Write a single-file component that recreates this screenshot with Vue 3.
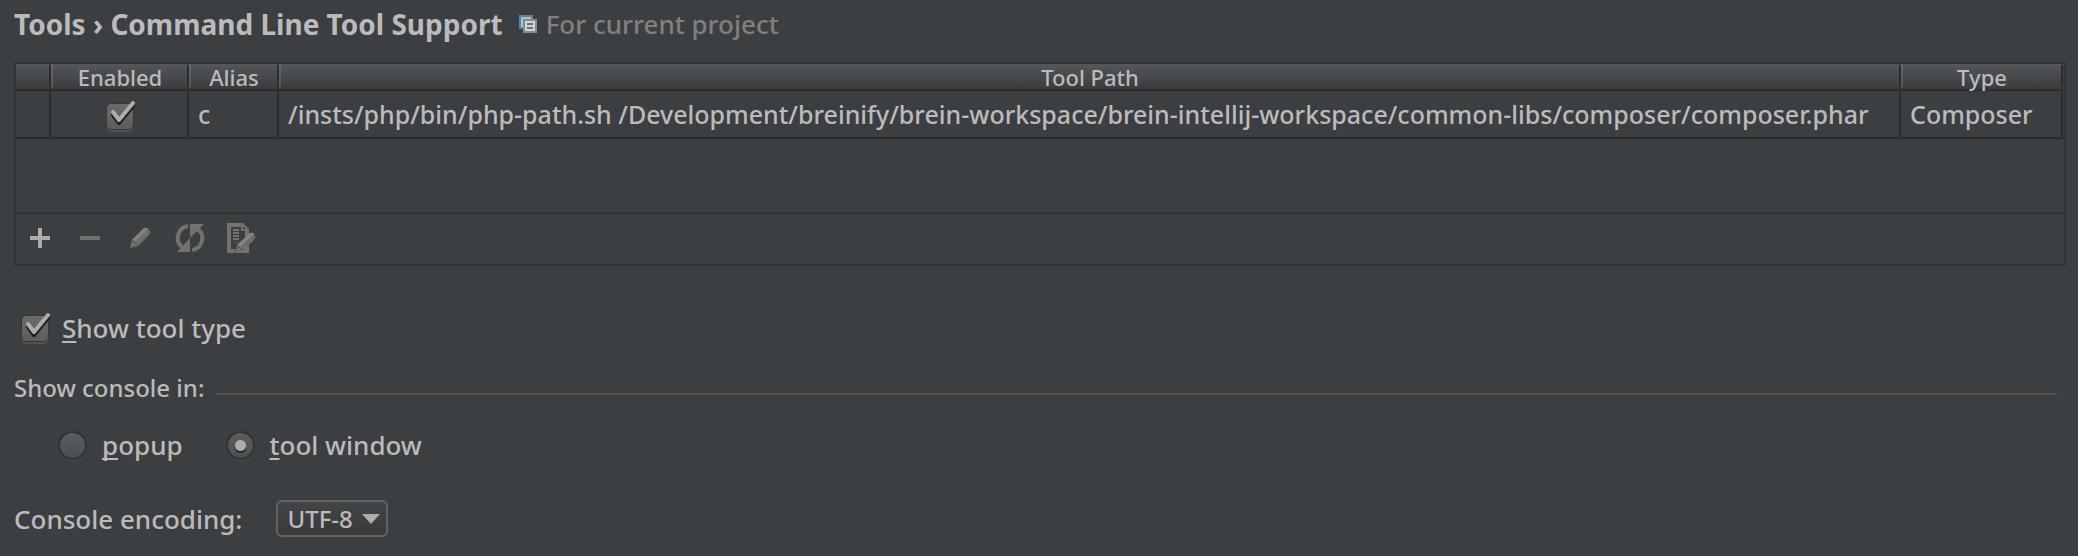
<script setup>
import { ref } from 'vue'

const tools = ref([
  {
    enabled: true,
    alias: 'c',
    path: '/insts/php/bin/php-path.sh /Development/breinify/brein-workspace/brein-intellij-workspace/common-libs/composer/composer.phar',
    type: 'Composer',
  },
])
const showType = ref(true)
const consoleIn = ref('window')
const encoding = ref('UTF-8')
</script>

<template>
  <main class="page">
    <header class="title">
      <h1>Tools › Command Line Tool Support</h1>
      <svg class="scope-icon" width="18" height="18" viewBox="0 0 18 18" aria-hidden="true">
        <path fill="#4a88ac" d="M0 0h14v14H0z" />
        <path fill="#b9c0c3" d="M2 2h10v10H2z" />
        <path fill="#4a5357" d="M4 4h10v10H4z" />
        <path fill="#868a87" d="M4 4h14v14H4z" />
        <path fill="#d2d4d2" d="M6 6h10v10H6z" />
        <path fill="#6f7371" d="M8 8h6v2H8zM8 12h6v2H8z" />
      </svg>
      <span class="scope">For current project</span>
    </header>

    <section class="panel">
      <table>
        <colgroup>
          <col class="c-mark" /><col class="c-enabled" /><col class="c-alias" /><col /><col class="c-type" />
        </colgroup>
        <thead>
          <tr>
            <th></th>
            <th>Enabled</th>
            <th>Alias</th>
            <th>Tool Path</th>
            <th>Type</th>
          </tr>
        </thead>
        <tbody>
          <tr v-for="tool in tools" :key="tool.alias">
            <td></td>
            <td class="center">
              <span class="tick">
                <input v-model="tool.enabled" type="checkbox" aria-label="Enabled" />
                <svg v-if="tool.enabled" width="32" height="32" viewBox="0 0 32 32" aria-hidden="true">
                  <path class="mark-shade" d="M9 15l6 8L29 6" />
                  <path class="mark" d="M9 12l6 8L29 3" />
                </svg>
              </span>
            </td>
            <td>{{ tool.alias }}</td>
            <td>{{ tool.path }}</td>
            <td>{{ tool.type }}</td>
          </tr>
        </tbody>
      </table>
      <div class="toolbar">
        <button type="button" aria-label="Add">
          <svg width="32" height="32" viewBox="0 0 32 32"><path fill="#adadad" d="M13 5h4v8h8v4h-8v8h-4v-8H5v-4h8z" /></svg>
        </button>
        <button type="button" aria-label="Remove">
          <svg width="32" height="32" viewBox="0 0 32 32"><path fill="#717272" d="M5 13h20v4H5z" /></svg>
        </button>
        <button type="button" aria-label="Edit">
          <svg width="32" height="32" viewBox="0 0 32 32">
            <path fill="#6c6d6d" d="M5 25l2-8L18 6q2-2 4-1l3 3q1 2-1 4L13 23z" />
            <path fill="#828383" d="M7 17L18 6q2-2 4-1l1 1L10 19z" />
            <path stroke="#4c4f50" d="M8 17l5 5" />
          </svg>
        </button>
        <button type="button" aria-label="Refresh">
          <svg width="32" height="32" viewBox="0 0 32 32">
            <path fill="#717272" d="M2 29h13V15zM29 1H15v14z" />
            <path fill="none" stroke="#717272" stroke-width="4" d="M13 3A12 12 0 0 0 7 24M17 27A12 12 0 0 0 23 6" />
          </svg>
        </button>
        <button type="button" aria-label="Open in editor">
          <svg width="32" height="32" viewBox="0 0 32 32">
            <path fill="#717272" fill-rule="evenodd" d="M2 0h16l6 6v24H2zM6 4v22h14V8h-4V4z" />
            <path fill="none" stroke="#717272" stroke-width="2" d="M8 7h6M8 10h6M8 13h6M8 16h6" />
            <path stroke="#575a5b" d="M8 19h6" />
            <path fill="#3c3f41" d="M18 3v3h3z" />
            <path fill="#6c6d6d" d="M10 30l2-8L24 11q2-2 4-1l2 3q1 2-1 4L17 28z" />
            <path fill="#828383" d="M12 22L24 11q2-2 4-1l1 1L15 24z" />
            <path stroke="#4c4f50" d="M12 22l5 5M10 30l2-8" />
          </svg>
        </button>
      </div>
    </section>

    <label class="option show-type">
      <span class="tick">
        <input v-model="showType" type="checkbox" />
        <svg v-if="showType" width="32" height="32" viewBox="0 0 32 32" aria-hidden="true">
          <path class="mark-shade" d="M9 15l6 8L29 6" />
          <path class="mark" d="M9 12l6 8L29 3" />
        </svg>
      </span>
      <span><u>S</u>how tool type</span>
    </label>

    <section role="radiogroup" aria-labelledby="console-in">
      <div id="console-in" class="group-title">Show console in:</div>
      <div class="radios">
        <label class="option">
          <input v-model="consoleIn" type="radio" name="console" value="popup" />
          <span><u>p</u>opup</span>
        </label>
        <label class="option">
          <input v-model="consoleIn" type="radio" name="console" value="window" />
          <span><u>t</u>ool window</span>
        </label>
      </div>
    </section>

    <div class="encoding">
      <label for="encoding">Console encoding:</label>
      <span class="combo">
        <select id="encoding" v-model="encoding">
          <option>UTF-8</option>
        </select>
        <svg width="18" height="10" viewBox="0 0 18 10" aria-hidden="true"><path fill="#adadad" d="M0 0h18L9 10z" /></svg>
      </span>
    </div>
  </main>
</template>

<style>
html {
  background: #3c3f41;
}
</style>

<style scoped>
.page {
  padding: 7px 12px 16px 14px;
  color: #bbbbbb;
  font: 500 26px/32px "Noto Sans", "Open Sans", sans-serif;
}
.title {
  display: flex;
  align-items: center;
  height: 34px;
}
h1 {
  margin: 0;
  font-size: 28px;
  font-weight: 700;
}
.scope-icon {
  margin: 0 9px 0 16px;
}
.scope {
  color: #808080;
}
.panel {
  margin-top: 21px;
  border: 2px solid #323232;
}
table {
  width: 100%;
  table-layout: fixed;
  border-collapse: separate;
  border-spacing: 0;
  padding-right: 1px;
  font-size: 25px;
  margin-bottom: 73px;
}
.c-mark { width: 35px; }
.c-enabled { width: 138px; }
.c-alias { width: 90px; }
.c-type { width: 162px; }
th,
td {
  box-sizing: border-box;
  white-space: nowrap;
}
th {
  height: 27px;
  padding: 1px 0 0;
  border-bottom: 2px solid #2c2d2e;
  font-size: 22px;
  font-weight: 500;
  line-height: 24px;
  background:
    linear-gradient(#2c2d2e, #2c2d2e) right 1px / 2px 22px no-repeat,
    linear-gradient(#66696b, #55585a) left 1px / 2px 22px no-repeat,
    linear-gradient(#54585b, #3a3b3d);
}
th:first-child {
  background:
    linear-gradient(#2c2d2e, #2c2d2e) right 1px / 2px 22px no-repeat,
    linear-gradient(#54585b, #3a3b3d);
}
td {
  height: 48px;
  padding: 0 9px;
  border: solid #2c2d2e;
  border-width: 0 2px 2px 0;
}
td.center {
  padding: 0 8px 0 10px;
  text-align: center;
}
.toolbar {
  display: flex;
  height: 50px;
  border-top: 2px solid #323232;
}
button {
  width: 50px;
  padding: 0;
  border: 0;
  background: none;
}
button svg {
  display: block;
  margin: 0 auto;
}
.tick {
  display: inline-grid;
  vertical-align: middle;
}
.tick > * {
  grid-area: 1 / 1;
}
.tick svg {
  pointer-events: none;
  z-index: 1;
}
.tick input {
  appearance: none;
  width: 28px;
  height: 27px;
  margin: 3px 2px 2px;
  border: 1px solid #353637;
  border-radius: 5px;
  background: linear-gradient(#6b6b6b, #5c5c5c);
  box-shadow: 0 2px 0 #505355;
}
.mark,
.mark-shade {
  fill: none;
  stroke-width: 4;
  stroke-linejoin: round;
  stroke-linecap: round;
}
.mark { stroke: #adadad; }
.mark-shade { stroke: #1f1f1f; }
.option {
  display: flex;
  align-items: center;
}
u {
  text-decoration-thickness: 2px;
  text-underline-offset: 3px;
  text-decoration-skip-ink: none;
}
.show-type {
  gap: 11px;
  margin: 46px 0 0 5px;
}
.group-title {
  display: flex;
  gap: 12px;
  margin-top: 28px;
  padding-right: 9px;
  font-size: 24px;
}
.group-title::after {
  content: "";
  flex: 1;
  height: 2px;
  margin-top: 21px;
  background: #555350;
}
.radios {
  display: flex;
  gap: 43px;
  margin: 25px 0 0 44px;
}
.radios .option {
  gap: 15px;
}
.radios input {
  appearance: none;
  width: 29px;
  height: 29px;
  margin: 0;
  border: 2px solid #303234;
  border-radius: 50%;
  background: linear-gradient(#5a5e60, #4b4f51);
  box-shadow: 0 1px 0 #4b4e50;
}
.radios input:checked {
  background:
    radial-gradient(circle at 50% 50%, #adadad 5px, transparent 6px),
    radial-gradient(circle at 50% 58%, #232323 5px, transparent 6px),
    linear-gradient(#5a5e60, #4b4f51);
}
.encoding {
  display: flex;
  align-items: center;
  gap: 34px;
  margin-top: 39px;
}
.combo {
  display: grid;
  align-items: center;
}
.combo > * {
  grid-area: 1 / 1;
}
.combo svg {
  justify-self: end;
  margin-right: 8px;
  pointer-events: none;
}
select {
  appearance: none;
  width: 112px;
  height: 37px;
  padding: 0 0 0 9px;
  border: 2px solid #616365;
  border-radius: 6px;
  background: linear-gradient(#424547, #38393b);
  color: #bbbbbb;
  font: 500 24px/32px "Noto Sans", "Open Sans", sans-serif;
}
</style>
